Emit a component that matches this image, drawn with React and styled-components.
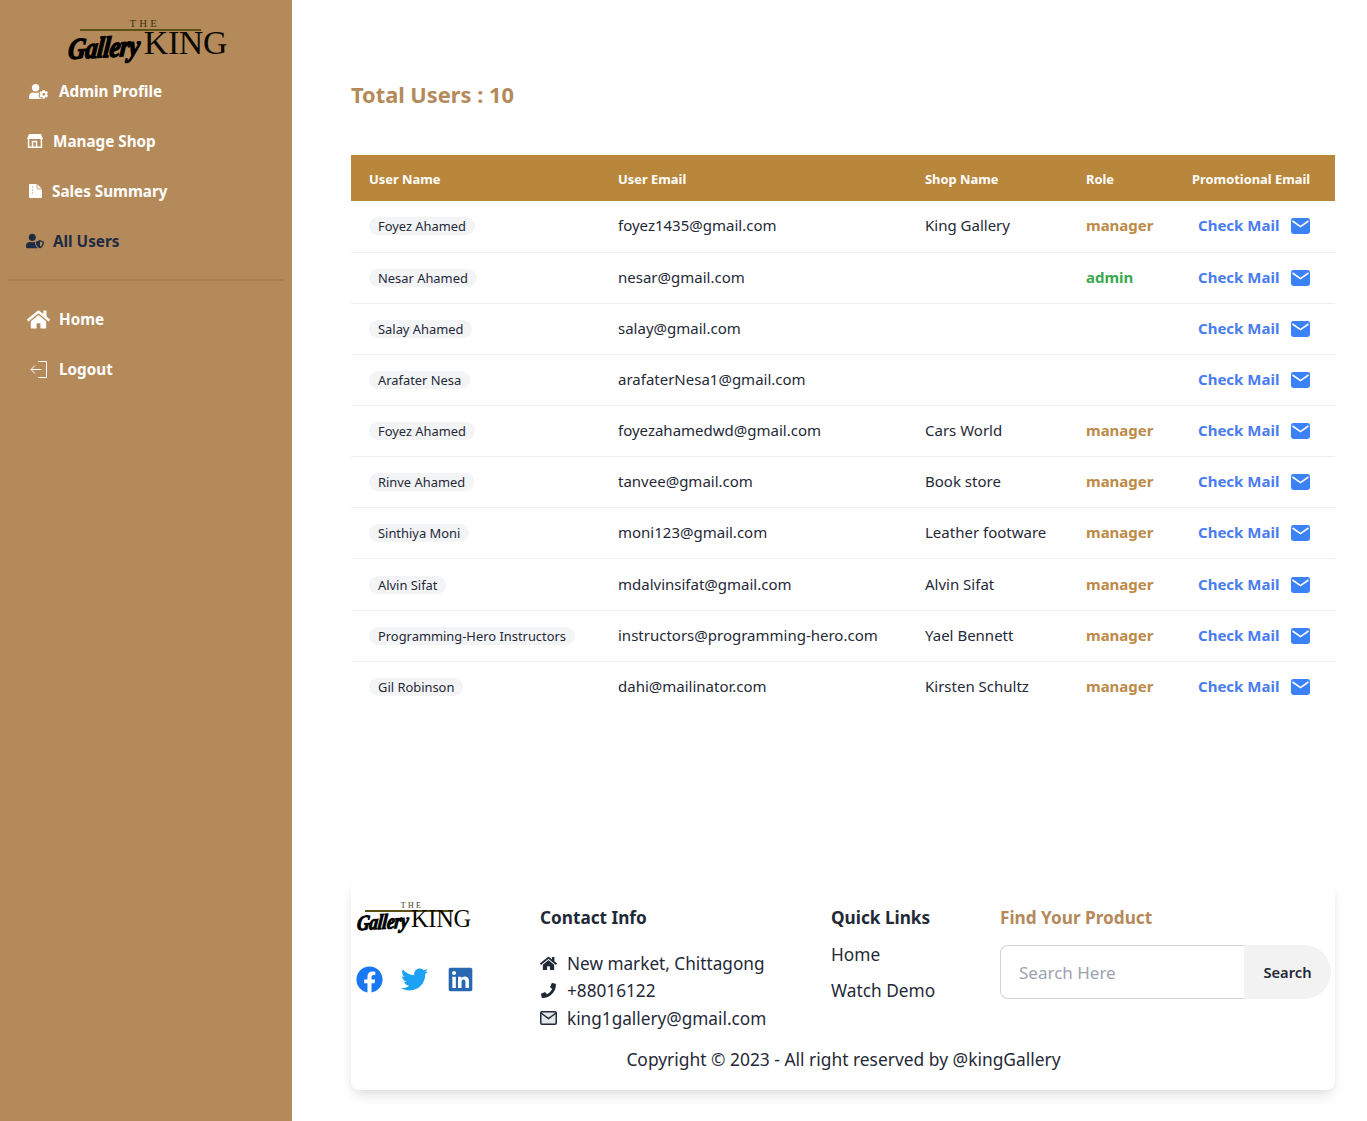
import React from "react";
import styled, { createGlobalStyle } from "styled-components";
import { FaHome, FaUserCog, FaUserShield, FaFacebook, FaTwitter, FaLinkedin, FaPhone } from "react-icons/fa";

const GlobalStyle = createGlobalStyle`
  html, body { margin: 0; padding: 0; background: #fff; }
  body { font-family: "Noto Sans", "Open Sans", sans-serif; color: #1f2937; }
  * { box-sizing: border-box; }
`;

const Page = styled.div`
  display: flex;
  width: 1367px;
  height: 1121px;
  overflow: hidden;
`;

const Sidebar = styled.aside`
  width: 292px;
  flex: none;
  background: #b58a5a;
  padding: 16px 8px 0;
  display: flex;
  flex-direction: column;
`;

const LogoWrap = styled.div`
  position: relative;
  width: ${(p) => p.$w}px;
  height: ${(p) => p.$h}px;
  flex: none;
  font-family: "Liberation Serif", serif;
  color: #0a0800;
`;
const LogoThe = styled.span`
  position: absolute;
  top: 4%;
  left: 39%;
  font-size: ${(p) => p.$s * 0.3}px;
  line-height: 1;
  letter-spacing: 0.3em;
  color: #3c3410;
`;
const LogoRule = styled.span`
  position: absolute;
  left: 8%;
  right: 16%;
  top: 27%;
  height: 2px;
  background: #5c5018;
`;
const LogoScript = styled.span`
  position: absolute;
  left: 0;
  bottom: 0;
  font-size: ${(p) => p.$s * 0.68}px;
  line-height: 1;
  font-weight: 700;
  font-style: italic;
  letter-spacing: -0.02em;
  transform: rotate(-3deg) scaleY(1.2) skewX(-10deg);
  transform-origin: left bottom;
  -webkit-text-stroke: ${(p) => p.$s * 0.035}px #000;
  color: #000;
`;
const LogoKing = styled.span`
  position: absolute;
  right: 0;
  bottom: 17.2%;
  font-size: ${(p) => p.$s * 0.94}px;
  line-height: 0.75;
  letter-spacing: -0.01em;
`;

const Logo = ({ w, h, s }) => (
  <LogoWrap $w={w} $h={h}>
    <LogoThe $s={s}>THE</LogoThe>
    <LogoRule />
    <LogoScript $s={s}>Gallery</LogoScript>
    <LogoKing $s={s}>KING</LogoKing>
  </LogoWrap>
);

const SideLogoRow = styled.div`
  display: flex;
  justify-content: center;
  height: 50px;
  padding-left: 2px;
`;

const NavList = styled.nav`
  display: flex;
  flex-direction: column;
`;

const NavItem = styled.a`
  display: flex;
  align-items: center;
  height: 50px;
  padding-left: ${(p) => p.$pad}px;
  gap: ${(p) => p.$gap}px;
  font-size: 15.25px;
  font-weight: 700;
  color: ${(p) => (p.$active ? "#1f2a44" : "#fff")};
  svg { flex: none; }
`;

const Divider = styled.hr`
  border: 0;
  height: 2px;
  background: #a87f53;
  margin: 13px 0 13px;
`;

const Main = styled.main`
  flex: 1;
  padding: 79px 32px 0 59px;
  display: flex;
  flex-direction: column;
`;

const Title = styled.h1`
  margin: 0 0 44px;
  font-size: 21.8px;
  line-height: 32px;
  font-weight: 700;
  color: #b58a5a;
`;

const Table = styled.table`
  width: 984px;
  table-layout: fixed;
  border-collapse: collapse;
`;

const Th = styled.th`
  background: #b9873b;
  color: #fff;
  height: 46px;
  font-size: 12.9px;
  font-weight: 700;
  text-align: left;
  padding: 2px 0 0 18px;
  white-space: nowrap;
`;

const Tr = styled.tr`
  height: 51.15px;
  border-bottom: 1px solid #f0f0f0;
  &:last-child { border-bottom: 0; }
`;

const Td = styled.td`
  padding: 0 0 2px 18px;
  font-size: 15px;
  color: #1f2937;
  white-space: nowrap;
`;

const NamePill = styled.span`
  display: inline-block;
  background: #f3f4f6;
  border-radius: 999px;
  padding: 0 9px;
  height: 18px;
  line-height: 19px;
  margin-top: 2px;
  font-size: 12.9px;
  color: #1f2937;
`;

const Role = styled.span`
  font-weight: 700;
  color: ${(p) => (p.$admin ? "#3aa84f" : "#bd8a47")};
`;

const MailLink = styled.span`
  display: flex;
  align-items: center;
  padding-left: 6px;
  gap: 12px;
  font-weight: 700;
  color: #4a7cf0;
  svg { margin-top: 2px; }
`;

const MailGlyph = () => (
  <svg width="19" height="16" viewBox="0 0 19 16">
    <rect width="19" height="16" rx="2.4" fill="#3b82f6" />
    <path d="M1.5 3 L9.5 8.6 L17.5 3" fill="none" stroke="#fff" strokeWidth="1.6" />
  </svg>
);

const StoreGlyph = () => (
  <svg width="16" height="14" viewBox="0 0 16 14" fill="none">
    <path d="M2 0h12l2 5H0z" fill="#fff" />
    <path d="M1.6 5v8.2h12.8V5M5.5 13V7.5h4V13" stroke="#fff" strokeWidth="1.5" />
  </svg>
);

const FileGlyph = () => (
  <svg width="13" height="14" viewBox="0 0 13 14">
    <path d="M0 1a1 1 0 0 1 1-1h7l5 5v8a1 1 0 0 1-1 1H1a1 1 0 0 1-1-1z" fill="#fff" />
    <path d="M8 0v4a1 1 0 0 0 1 1h4" fill="none" stroke="#b58a5a" strokeWidth="0.8" />
    <path d="M3.5 2.5v1M3.5 5.5v1M3.5 8.5v1" stroke="#b58a5a" strokeWidth="1" />
  </svg>
);

const LogoutGlyph = () => (
  <svg width="18" height="17" viewBox="0 0 18 17" fill="none" stroke="#fff" strokeWidth="1">
    <path d="M8 0.5h8.5v16H8" />
    <path d="M11.5 8.5H1M5 4.5l-4 4 4 4" />
  </svg>
);

const EnvelopeGlyph = () => (
  <svg width="17" height="14" viewBox="0 0 17 14">
    <rect x="0.75" y="0.75" width="15.5" height="12.5" rx="1.2" fill="#e5e7eb" stroke="#1f2937" strokeWidth="1.5" />
    <path d="M1 2l7.5 5.5L16 2" fill="none" stroke="#1f2937" strokeWidth="1.5" />
  </svg>
);

const Spacer = styled.div`
  height: 168px;
  flex: none;
`;

const Footer = styled.footer`
  width: 984px;
  height: 210px;
  background: #fff;
  border-radius: 8px;
  box-shadow: 0 8px 14px -3px rgba(0, 0, 0, 0.12), 0 2px 6px -2px rgba(0, 0, 0, 0.06);
  padding: 20px 4px 0 5px;
  display: flex;
  flex-direction: column;
`;

const FooterCols = styled.div`
  display: grid;
  grid-template-columns: 184px 291px 169px 331px;
  height: 147px;
`;

const BrandCol = styled.div`
  display: flex;
  flex-direction: column;
  gap: 32px;
`;

const Socials = styled.div`
  display: flex;
  align-items: center;
  gap: 18px;
  svg:nth-child(2) { margin-right: 1px; }
`;

const ColTitle = styled.h3`
  margin: 6px 0 0;
  font-size: 17.2px;
  line-height: 24px;
  font-weight: 700;
  color: ${(p) => p.$accent || "#1f2937"};
`;

const ContactList = styled.ul`
  list-style: none;
  margin: 19px 0 0;
  padding: 0;
  display: flex;
  flex-direction: column;
`;

const ContactRow = styled.li`
  display: flex;
  align-items: center;
  gap: 10px;
  height: 27.5px;
  font-size: 17.2px;
  color: #1f2937;
`;

const ContactIcon = styled.span`
  display: flex;
  justify-content: center;
  width: 17px;
  flex: none;
`;

const QuickList = styled.div`
  display: flex;
  flex-direction: column;
  gap: 12px;
  margin-top: 13px;
`;

const QuickLink = styled.a`
  font-size: 17.3px;
  line-height: 24px;
  color: #1f2937;
`;

const SearchBar = styled.div`
  display: flex;
  height: 54px;
  margin-top: 15px;
  width: 331px;
`;

const SearchInput = styled.div`
  width: 244px;
  border: 1px solid #d1d5db;
  border-right: 0;
  border-radius: 8px 0 0 8px;
  padding-left: 18px;
  display: flex;
  align-items: center;
  font-size: 17px;
  color: #9ca3af;
`;

const SearchButton = styled.button`
  flex: 1;
  border: 0;
  background: #f2f2f2;
  border-radius: 0 27px 27px 0;
  font: 600 14.7px "Noto Sans", sans-serif;
  color: #1f2937;
  padding: 0;
`;

const Copy = styled.div`
  text-align: center;
  font-size: 17.4px;
  line-height: 24px;
  color: #1f2937;
`;

const users = [
  ["Foyez Ahamed", "foyez1435@gmail.com", "King Gallery", "manager"],
  ["Nesar Ahamed", "nesar@gmail.com", "", "admin"],
  ["Salay Ahamed", "salay@gmail.com", "", ""],
  ["Arafater Nesa", "arafaterNesa1@gmail.com", "", ""],
  ["Foyez Ahamed", "foyezahamedwd@gmail.com", "Cars World", "manager"],
  ["Rinve Ahamed", "tanvee@gmail.com", "Book store", "manager"],
  ["Sinthiya Moni", "moni123@gmail.com", "Leather footware", "manager"],
  ["Alvin Sifat", "mdalvinsifat@gmail.com", "Alvin Sifat", "manager"],
  ["Programming-Hero Instructors", "instructors@programming-hero.com", "Yael Bennett", "manager"],
  ["Gil Robinson", "dahi@mailinator.com", "Kirsten Schultz", "manager"],
];

export default function App() {
  return (
    <Page>
      <GlobalStyle />
      <Sidebar>
        <SideLogoRow>
          <Logo w={160} h={48} s={36} />
        </SideLogoRow>
        <NavList>
          <NavItem $pad={21} $gap={11}><FaUserCog size={19} />Admin Profile</NavItem>
          <NavItem $pad={19} $gap={10}><StoreGlyph />Manage Shop</NavItem>
          <NavItem $pad={21} $gap={10}><FileGlyph />Sales Summary</NavItem>
          <NavItem $active $pad={18} $gap={9}><FaUserShield size={18} />All Users</NavItem>
        </NavList>
        <Divider />
        <NavList>
          <NavItem $pad={19} $gap={9}><FaHome size={23} />Home</NavItem>
          <NavItem $pad={22} $gap={11}><LogoutGlyph />Logout</NavItem>
        </NavList>
      </Sidebar>
      <Main>
        <Title>Total Users : 10</Title>
        <Table>
          <colgroup>
            <col style={{ width: 249 }} />
            <col style={{ width: 307 }} />
            <col style={{ width: 161 }} />
            <col style={{ width: 106 }} />
            <col style={{ width: 161 }} />
          </colgroup>
          <thead>
            <tr>
              <Th>User Name</Th>
              <Th>User Email</Th>
              <Th>Shop Name</Th>
              <Th>Role</Th>
              <Th>Promotional Email</Th>
            </tr>
          </thead>
          <tbody>
            {users.map((u) => (
              <Tr key={u[1]}>
                <Td><NamePill>{u[0]}</NamePill></Td>
                <Td>{u[1]}</Td>
                <Td>{u[2]}</Td>
                <Td><Role $admin={u[3] === "admin"}>{u[3]}</Role></Td>
                <Td><MailLink>Check Mail <MailGlyph /></MailLink></Td>
              </Tr>
            ))}
          </tbody>
        </Table>
        <Spacer />
        <Footer>
          <FooterCols>
            <BrandCol>
              <Logo w={115} h={34} s={26} />
              <Socials>
                <FaFacebook size={27} color="#1877f2" />
                <FaTwitter size={27} color="#1da1f2" />
                <FaLinkedin size={27} color="#2867b2" />
              </Socials>
            </BrandCol>
            <div>
              <ColTitle>Contact Info</ColTitle>
              <ContactList>
                <ContactRow><ContactIcon><FaHome size={17} /></ContactIcon>New market, Chittagong</ContactRow>
                <ContactRow><ContactIcon><FaPhone size={15} /></ContactIcon>+88016122</ContactRow>
                <ContactRow><ContactIcon><EnvelopeGlyph /></ContactIcon>king1gallery@gmail.com</ContactRow>
              </ContactList>
            </div>
            <div>
              <ColTitle>Quick Links</ColTitle>
              <QuickList>
                <QuickLink>Home</QuickLink>
                <QuickLink>Watch Demo</QuickLink>
              </QuickList>
            </div>
            <div>
              <ColTitle $accent="#b58a5a">Find Your Product</ColTitle>
              <SearchBar>
                <SearchInput>Search Here</SearchInput>
                <SearchButton>Search</SearchButton>
              </SearchBar>
            </div>
          </FooterCols>
          <Copy>Copyright © 2023 - All right reserved by @kingGallery</Copy>
        </Footer>
      </Main>
    </Page>
  );
}
